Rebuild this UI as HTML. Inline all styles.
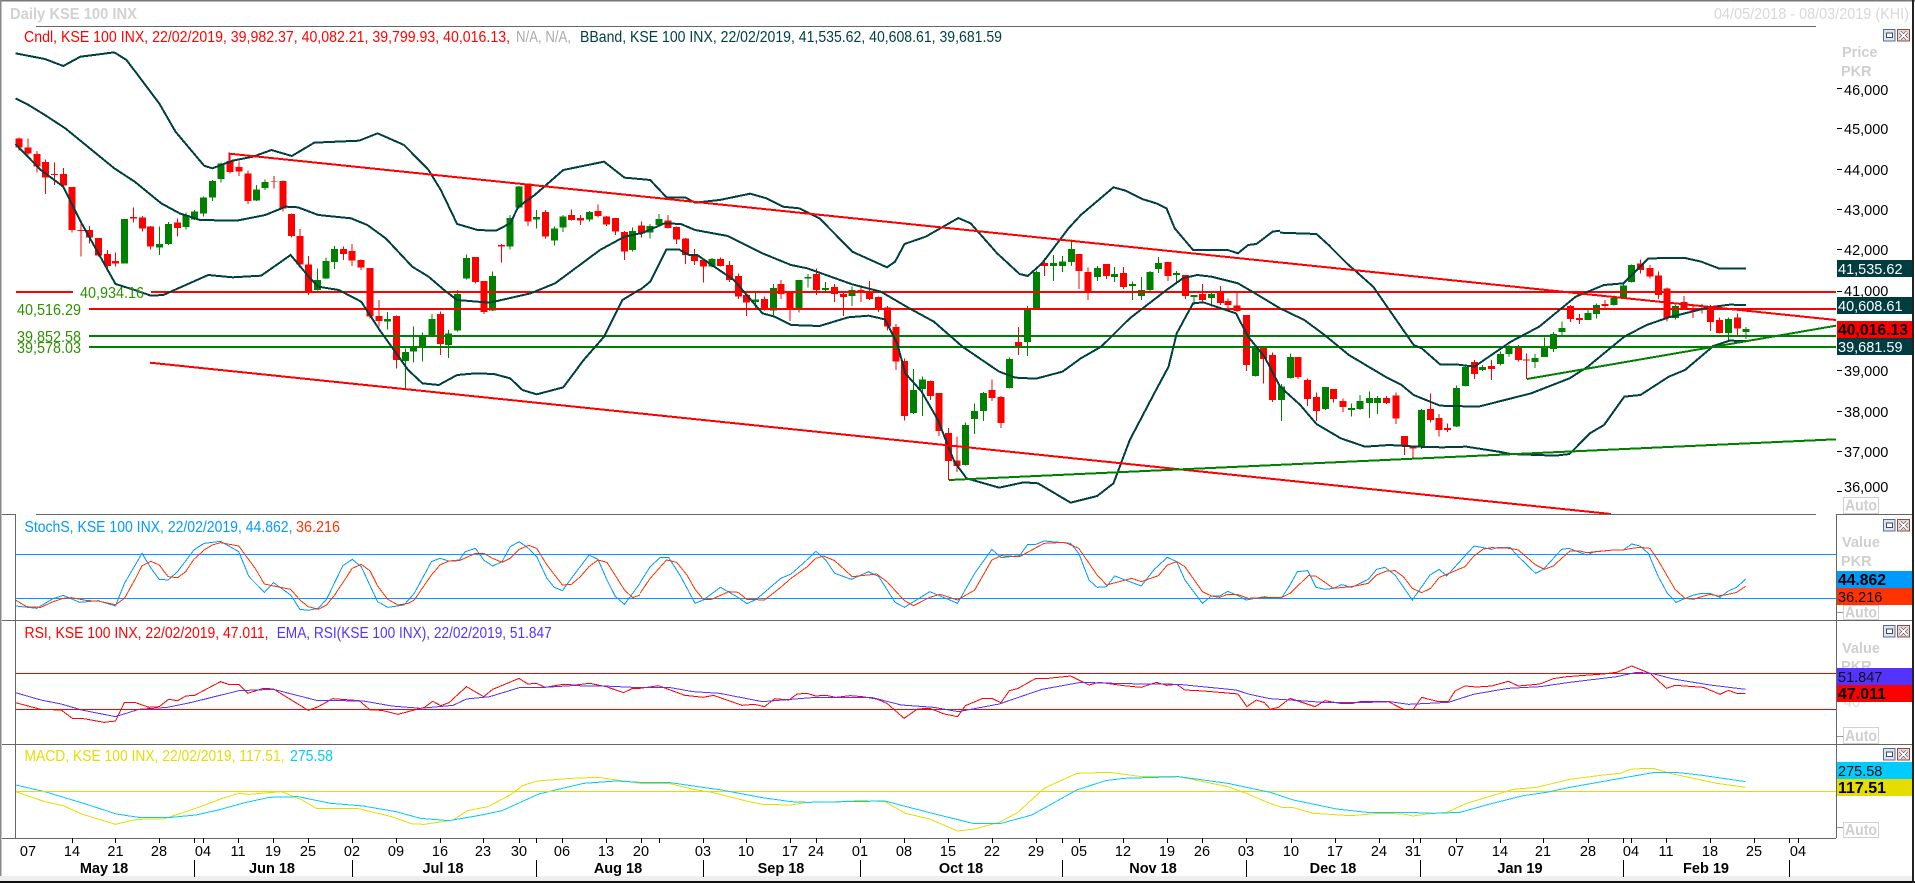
<!DOCTYPE html>
<html><head><meta charset="utf-8"><title>Daily KSE 100 INX</title>
<style>
html,body{margin:0;padding:0;background:#fff;width:1915px;height:883px;overflow:hidden}
svg{display:block}
text{font-family:"Liberation Sans",Arial,sans-serif;font-size:14.5px}
text[textLength]{font-size:15.5px}
.b{font-weight:bold}
.g{fill:#cfcfcf;font-weight:bold}
path,polyline,line,rect{shape-rendering:crispEdges}
.v{fill:none;vector-effect:non-scaling-stroke}
.bb{stroke:#004040;stroke-width:2}
.t1{stroke-width:1}
</style></head><body>
<svg width="1915" height="883" viewBox="0 0 1915 883" xmlns="http://www.w3.org/2000/svg">
<rect width="1915" height="883" fill="#fff"/>

<!-- CANDLES left -->
<g transform="translate(0 130) scale(.40816 .33333)">
<path class="v" stroke="#f00" stroke-width="1" d="M47 22V62M69 25V75M91 63V128M111 88V192M133 98V165M155 114V170M177 171V308M198 270V380M219 288V340M241 324V380M263 360V418M283 368V410M327 232V278M349 258V305M369 288V358M435 265V320M563 70V130M585 95V138M607 122V222M671 138V175M693 152V245M714 250V323M735 297V414M756 378V495M842 350V390M863 342V408M885 388V420M907 414V565M928 510V590M971 556V716M1079 545V675M1165 381V460M1186 453V552M1229 342V398M1293 160V288M1336 240V325M1400 238V272M1422 255V285M1465 223V262M1486 258V288M1508 264V315M1530 303V390"/>
<path class="v" stroke="#008000" stroke-width="1" d="M391 290V375M413 276V345M456 248V298M477 240V270M499 200V260M521 150V213M542 97V158M628 165V213M649 148V180M778 415V482M799 382V447M820 348V417M949 546V598M993 655V775M1013 590V698M1035 608V695M1058 552V618M1099 600V684M1121 480V604M1143 373V448M1207 424V543M1250 255V358M1272 168V235M1315 240V296M1358 290V347M1379 255V306M1444 243V274M1550 292V365"/>
<path class="v" stroke="#f00" stroke-width="7" d="M47 25V52M69 52V70M91 72V110M111 96V143M133 132V135M155 132V166M177 171V300M198 300V303M219 300V322M241 324V377M263 372V408M283 393V401M327 261V265M349 262V296M369 290V350M435 277V294M563 93V126M585 111V125M607 130V213M671 153V155M693 153V235M714 252V318M735 318V404M756 403V485M842 357V372M863 363V392M885 390V413M907 414V560M928 558V573M971 558V690M1079 552V642M1165 381V456M1186 453V546M1229 345V350M1293 160V275M1336 246V320M1400 255V270M1422 264V271M1465 243V258M1486 260V284M1508 264V305M1530 306V365"/>
<path class="v" stroke="#008000" stroke-width="7" d="M305 267V401M391 342V353M413 282V342M456 255V291M477 245V268M499 203V251M521 153V203M542 100V147M628 178V212M649 156V174M778 450V480M799 393V446M820 357V396M949 567V575M993 666V693M1013 652V665M1035 617V652M1058 567V617M1099 610V645M1121 492V601M1143 384V446M1207 438V542M1250 264V350M1272 170V233M1315 261V269M1358 296V332M1379 260V293M1444 246V269M1550 303V360"/>
</g>
<!-- CANDLES middle -->
<g transform="translate(640 100) scale(.40816 .33333)">
<path class="v" stroke="#f00" stroke-width="1" d="M4 365V413M68 345V386M90 380V432M111 414V492M133 447V495M155 478V548M197 472V500M219 483V546M241 520V597M261 585V648M305 590V632M346 540V597M368 575V663M432 505V585M477 552V606M498 578V648M541 558V606M562 543V600M584 590V636M606 618V692M627 672V810M648 775V962M712 842V900M733 879V1008M756 984V1140M777 1010V1116M863 838V903M884 888V984M927 681V765M991 474V528M1076 462V567M1098 502V600M1143 492V537M1184 501V567M1293 486V543M1336 525V597M1378 552V606M1422 558V615M1441 595V630M1463 578V636M1486 645V813M1527 740V850M1550 757V906"/>
<path class="v" stroke="#008000" stroke-width="1" d="M25 372V416M47 342V378M176 474V502M283 578V628M327 552V645M390 540V638M412 522V562M455 546V576M520 560V618M670 807V942M692 830V948M797 968V1096M820 910V1002M842 876V963M905 773V865M949 618V768M971 512V627M1013 465V543M1035 468V516M1057 418V498M1121 498V543M1163 501V546M1207 545V600M1229 531V600M1249 513V575M1270 471V519M1314 513V546M1357 585V615M1400 575V620M1508 735V829"/>
<path class="v" stroke="#f00" stroke-width="7" d="M4 376V400M68 361V384M90 381V419M111 416V465M133 462V483M155 480V500M197 477V498M219 495V540M241 528V590M261 585V608M305 597V630M346 552V582M368 575V628M432 522V570M477 561V582M498 582V591M541 570V576M562 576V597M584 591V628M606 622V680M627 681V785M648 783V948M712 843V888M733 879V993M756 999V1083M777 1081V1098M863 870V894M884 891V969M927 726V738M991 489V498M1076 462V513M1098 516V576M1143 492V528M1184 519V561M1293 486V528M1336 525V588M1378 582V600M1422 576V609M1441 603V615M1463 616V633M1486 645V795M1527 743V777M1550 765V900"/>
<path class="v" stroke="#008000" stroke-width="7" d="M25 378V398M47 357V375M176 477V500M283 598V606M327 564V632M390 540V625M412 531V536M455 564V570M520 570V588M670 870V939M692 838V867M797 975V1095M820 933V957M842 879V933M905 777V864M949 627V726M971 516V625M1013 489V498M1035 484V498M1057 447V486M1121 504V531M1163 522V531M1207 552V558M1229 570V588M1249 516V570M1270 489V507M1314 519V525M1357 585V591M1400 582V594M1508 738V828"/>
</g>
<!-- CANDLES right -->
<g transform="translate(1280 230) scale(.40502 .33333)">
<path class="v" stroke="#f00" stroke-width="1" d="M45 381V447M68 445V528M90 487V573M132 477V518M155 505V546M263 498V522M286 488V582M307 618V675M328 650V684M371 490V578M393 552V620M414 580V606M480 390V447M522 390V450M589 345V395M609 370V447M717 225V276M739 252V282M803 210V234M890 88V130M913 105V146M934 125V207M955 172V275M998 198V240M1020 225V264M1042 222V250M1063 225V303M1085 262V310M1129 250V316"/>
<path class="v" stroke="#008000" stroke-width="1" d="M4 462V573M26 370V445M112 471V540M177 520V560M198 495V540M221 485V564M241 498V552M349 537V657M436 466V591M458 404V470M500 405V423M544 365V406M566 345V380M630 372V414M653 322V381M675 306V366M696 275V316M761 240V270M782 220V265M825 196V226M848 160V206M868 103V157M976 225V268M1107 262V333M1150 291V327"/>
<path class="v" stroke="#f00" stroke-width="7" d="M45 381V441M68 450V507M90 501V543M132 477V507M155 513V531M263 504V519M286 497V565M307 618V648M328 650V655M371 537V570M393 564V600M414 594V600M480 396V432M522 408V417M589 351V390M609 388V392M717 228V267M739 264V270M803 222V228M890 100V120M913 114V140M934 136V195M955 175V264M998 216V240M1020 240V242M1042 235V238M1063 228V276M1085 270V309M1129 262V296"/>
<path class="v" stroke="#008000" stroke-width="7" d="M4 470V510M26 381V444M112 471V537M177 534V540M198 513V537M221 504V519M241 504V519M349 540V651M436 474V590M458 411V468M500 411V420M544 372V402M566 350V372M630 384V396M653 348V381M675 312V357M696 294V306M761 249V270M782 225V252M825 204V225M848 166V204M868 105V156M976 228V264M1107 267V309M1150 297V306"/>
</g>

<!-- Horizontal levels -->
<path stroke="#f00" stroke-width="2" fill="none" d="M16 292H73M151 292H1836M89 309H1836"/>
<path stroke="#008000" stroke-width="2" fill="none" d="M89 336H1836M89 347H1836"/>

<!-- Bollinger -->
<g transform="translate(0 0) scale(.40816 .33333)">
<polyline class="v bb" points="38,160 110,177 155,198 197,170 230,165 280,157 310,180 350,245 390,310 430,395 500,497 520,505 570,482 620,470 665,450 715,468 770,428 880,422 925,400 990,435 1050,510 1080,570 1120,672 1170,690 1215,692 1250,670 1270,620 1310,585 1380,510 1480,485 1530,533 1568,537"/>
<polyline class="v bb" points="38,295 70,315 110,345 160,385 280,505 330,545 395,610 440,640 490,660 580,662 650,645 700,620 730,622 780,645 860,655 900,675 945,715 1010,800 1050,830 1088,870 1120,900 1200,908 1300,880 1360,850 1470,750 1530,710 1568,700"/>
</g>
<g transform="translate(0 130) scale(.40816 .33333)">
<polyline class="v bb" points="38,42 100,120 155,170 200,280 283,462 330,480 370,497 400,495 510,435 570,442 640,437 712,375 760,445 780,470 830,480 885,515 930,600 1000,720 1035,760 1075,765 1120,735 1165,730 1210,732 1250,745 1280,780 1315,793 1380,772 1430,690 1480,620 1525,510 1568,478"/>
</g>
<g transform="translate(640 100) scale(.40816 .33333)">
<polyline class="v bb" points="0,237 25,240 65,292 110,292 135,308 195,300 270,281 310,295 350,320 390,325 440,355 520,455 605,502 625,485 648,432 700,410 780,354 810,370 875,460 930,522 950,528 985,490 1050,385 1080,345 1160,262 1190,272 1230,297 1265,310 1290,325 1310,385 1355,450 1440,450 1465,460 1490,435 1510,432 1550,395 1568,392"/>
<polyline class="v bb" points="0,402 60,370 100,372 135,390 215,408 300,460 370,495 410,505 520,553 590,575 660,625 720,665 790,740 880,815 920,833 970,836 1035,815 1080,775 1130,740 1200,655 1290,570 1330,535 1365,525 1400,530 1465,550 1500,575 1568,625"/>
<polyline class="v bb" points="0,570 25,545 65,448 95,448 120,465 140,465 230,540 300,640 330,650 370,675 440,678 510,652 560,647 600,658 630,730 650,820 690,875 730,960 770,1085 800,1135 880,1163 940,1147 975,1150 1055,1208 1120,1188 1160,1150 1200,1020 1260,880 1295,800 1315,700 1355,610 1380,607 1460,640 1490,710 1530,770 1568,860"/>
</g>
<g transform="translate(1280 230) scale(.40502 .33333)">
<polyline class="v bb" points="0,8 90,12 120,45 165,100 230,170 270,240 330,345 350,355 395,403 440,404 480,410 570,335 640,290 690,240 730,200 800,165 848,160 910,85 1000,84 1040,95 1085,116 1150,116"/>
<polyline class="v bb" points="0,235 60,270 110,315 170,375 260,440 300,465 330,495 395,527 490,530 620,490 715,445 760,410 850,320 905,285 960,262 1000,250 1060,232 1110,224 1150,225"/>
<polyline class="v bb" points="0,470 50,525 90,582 150,625 210,650 270,645 340,650 400,652 460,650 540,665 570,672 680,677 715,672 765,610 800,585 850,500 890,495 960,440 1000,420 1070,348 1110,332 1150,333"/>
</g>

<!-- Trendlines -->
<path fill="none" stroke="#f00" stroke-width="2" d="M229.5 161V153.7L1836 320M150 362.7L1611 514"/>
<path fill="none" stroke="#008000" stroke-width="2" d="M949 480L1836 439.3M1527 379L1836 325.7"/>
<path fill="none" stroke="#f00" stroke-width="1" d="M1526.5 379V362"/>

<!-- Level labels -->
<g fill="#2f8f00">
<text x="80" y="298" textLength="64" lengthAdjust="spacingAndGlyphs">40,934.16</text>
<text x="17" y="315" textLength="64" lengthAdjust="spacingAndGlyphs">40,516.29</text>
<text x="17" y="342" textLength="64" lengthAdjust="spacingAndGlyphs">39,852.58</text>
<text x="17" y="353" textLength="64" lengthAdjust="spacingAndGlyphs">39,578.03</text>
</g>

<!-- Panel 2: StochS -->
<path stroke="#0099ff" stroke-width="1" fill="none" d="M16 554.5H1836M16 598.5H1836"/>
<g transform="translate(0 500) scale(.40816 .33333)">
<polyline class="v t1" stroke="#0099ff" points="38,318 90,325 130,296 155,286 195,307 240,302 283,318 305,250 348,160 370,205 390,238 412,240 435,215 475,150 500,130 540,124 585,155 610,230 648,277 670,248 712,285 735,328 755,331 780,325 800,298 840,197 863,178 885,200 925,305 950,322 990,315 1015,280 1057,185 1078,175 1100,183 1125,180 1140,155 1165,145 1185,180 1207,198 1230,185 1250,140 1272,125 1295,145 1315,170 1340,235 1358,262 1378,272 1400,235 1443,165 1465,178 1487,240 1508,290 1530,313 1568,250"/>
<polyline class="v t1" stroke="#ff3300" points="38,300 65,320 100,322 130,305 155,295 175,293 215,302 240,303 283,314 305,295 330,240 348,197 370,184 390,195 412,230 435,233 455,215 475,178 500,150 520,135 540,128 585,138 625,205 648,252 670,258 712,268 735,300 755,320 780,328 800,315 820,285 863,205 885,193 907,213 925,258 950,298 975,315 1000,310 1015,300 1057,225 1078,195 1100,183 1125,182 1165,160 1185,160 1207,175 1230,187 1250,175 1272,148 1295,136 1315,145 1340,195 1378,255 1400,253 1422,230 1443,200 1465,180 1487,187 1530,270 1550,293 1568,285"/>
<!-- RSI left -->
<polyline class="v t1" stroke="#f00" points="38,608 100,628 150,630 177,655 205,656 255,667 283,663 305,607 330,607 365,622 390,620 413,598 435,602 455,588 477,586 540,545 560,553 585,553 607,580 645,565 670,567 755,631 780,620 815,596 880,602 907,630 935,631 975,643 1040,622 1060,604 1080,617 1100,608 1143,560 1185,590 1207,568 1272,535 1293,552 1315,550 1335,562 1380,553 1410,555 1445,550 1485,560 1528,578 1550,565 1568,565"/>
<polyline class="v t1" stroke="#5533ff" points="38,578 100,600 150,612 200,630 283,650 340,628 410,622 470,607 585,572 670,568 775,601 890,603 960,618 1030,625 1110,616 1143,597 1200,590 1272,563 1335,562 1400,557 1480,558 1568,563"/>
<!-- MACD left -->
<polyline class="v t1" stroke="#e5dd00" points="38,875 110,905 155,917 200,942 283,973 335,958 400,957 480,925 545,895 585,880 610,883 690,875 740,900 775,925 875,925 960,950 1010,972 1040,973 1110,960 1145,932 1195,920 1250,885 1280,857 1315,843 1400,835 1465,832 1568,850"/>
<polyline class="v t1" stroke="#00ccff" points="38,855 110,875 210,912 285,942 340,952 420,952 480,945 535,930 600,908 660,892 730,890 810,910 890,918 970,935 1030,955 1100,962 1180,945 1230,932 1320,882 1430,850 1510,843 1568,847"/>
</g>
<path stroke="#f00" stroke-width="1" fill="none" d="M16 673.5H1836M16 709.5H1836"/>
<path stroke="#e5dd00" stroke-width="1" fill="none" d="M16 791.5H1836"/>
<g transform="translate(640 510) scale(.40816 .33333)">
<polyline class="v t1" stroke="#0099ff" points="0,218 25,170 50,142 70,142 100,200 135,280 155,270 197,232 240,262 262,281 285,268 345,205 370,192 400,160 431,124 455,150 477,190 518,208 560,185 585,200 625,277 648,292 710,245 755,268 778,280 820,190 862,118 885,143 930,137 950,103 970,103 990,93 1055,100 1075,130 1100,210 1120,232 1143,230 1163,198 1228,228 1260,178 1292,142 1315,155 1335,210 1378,280 1400,258 1420,258 1440,244 1465,257 1485,270 1530,260 1543,263"/>
<polyline class="v t1" stroke="#ff3300" points="0,250 25,205 65,150 90,157 115,195 135,238 155,268 175,268 218,245 240,247 262,268 305,270 345,232 370,205 410,170 431,145 450,138 477,152 520,200 580,192 605,215 648,272 670,287 710,262 735,253 778,270 820,240 862,150 885,137 930,140 990,100 1040,97 1075,115 1120,195 1143,225 1205,205 1228,215 1270,197 1292,165 1315,155 1335,170 1378,245 1400,258 1420,262 1440,253 1465,254 1490,265 1543,262"/>
<polyline class="v t1" stroke="#f00" points="0,535 45,527 110,556 155,562 180,556 250,586 280,583 305,590 330,566 365,570 385,552 410,550 430,558 455,556 480,562 515,557 545,560 580,567 605,580 647,625 680,597 710,595 745,612 778,620 797,587 840,565 862,565 884,578 905,542 925,536 970,505 1000,505 1055,498 1100,525 1125,517 1185,527 1228,532 1265,517 1290,526 1315,523 1335,540 1380,543 1420,547 1465,552 1487,590 1510,570 1530,578 1543,596"/>
<polyline class="v t1" stroke="#5533ff" points="0,532 75,533 130,545 195,550 300,575 430,562 570,563 640,585 720,592 780,605 880,582 985,538 1080,517 1190,521 1320,523 1460,540 1490,552 1543,566"/>
<polyline class="v t1" stroke="#e5dd00" points="0,820 70,820 130,838 180,848 260,873 300,883 370,885 410,877 490,875 540,871 600,875 650,910 710,927 778,963 820,957 880,937 925,908 990,835 1070,790 1150,787 1230,800 1320,800 1440,830 1485,850 1543,880"/>
<polyline class="v t1" stroke="#00ccff" points="0,817 75,818 130,828 200,840 300,863 370,875 410,877 600,873 700,905 815,940 885,940 960,915 1070,840 1140,812 1185,805 1320,800 1440,820 1543,847"/>
</g>
<g transform="translate(1270 510) scale(.33333)">
<polyline class="v t1" stroke="#0099ff" points="0,263 35,263 60,225 82,185 113,182 138,232 165,238 190,235 215,224 245,232 295,208 320,178 345,172 375,195 427,270 480,195 508,178 530,198 612,108 640,113 665,118 685,112 720,112 745,140 797,190 820,178 875,118 897,115 950,135 975,125 1030,120 1060,120 1085,102 1110,108 1135,130 1165,200 1192,250 1218,277 1268,256 1295,250 1320,250 1350,262 1375,243 1400,232 1427,207"/>
<polyline class="v t1" stroke="#ff3300" points="0,262 35,262 60,250 115,197 137,198 165,217 190,235 245,230 295,220 320,195 350,183 375,182 400,200 427,235 455,248 482,235 508,202 530,193 585,170 612,138 640,117 665,113 720,115 745,120 797,165 823,178 850,168 875,145 900,123 930,123 950,128 1030,120 1060,120 1085,115 1110,112 1140,115 1165,152 1215,238 1245,265 1270,268 1295,260 1320,253 1345,258 1375,253 1400,247 1427,229"/>
<polyline class="v t1" stroke="#f00" points="0,598 25,592 60,565 135,590 165,572 210,580 250,580 270,575 355,575 400,598 430,598 455,562 505,575 535,575 555,543 585,528 620,531 665,528 715,514 745,528 810,522 850,506 890,500 1000,492 1040,487 1085,468 1140,490 1190,535 1215,526 1300,532 1350,553 1375,541 1400,550 1427,550"/>
<polyline class="v t1" stroke="#5533ff" points="0,566 60,570 160,577 300,577 360,575 415,583 535,577 610,553 715,535 810,530 900,517 1040,500 1100,487 1145,490 1210,507 1320,525 1427,538"/>
<polyline class="v t1" stroke="#e5dd00" points="0,880 35,892 70,893 130,910 180,913 240,917 330,910 400,912 430,918 470,912 530,907 590,880 640,865 730,838 800,832 900,808 1000,795 1050,790 1085,777 1150,775 1200,790 1340,820 1427,832"/>
<polyline class="v t1" stroke="#00ccff" points="0,847 70,870 200,897 290,907 410,907 490,910 570,907 660,882 760,857 830,847 900,832 1080,800 1150,788 1225,788 1290,795 1427,815"/>
</g>

<!-- Frame lines -->
<rect x="0" y="0" width="1915" height="1.5" fill="#777"/>
<rect x="0" y="0" width="1.5" height="881" fill="#888"/>
<rect x="0" y="876" width="1912" height="5" fill="#eee"/>
<rect x="0" y="881" width="1915" height="2" fill="#111"/>
<rect x="1912" y="0" width="2" height="883" fill="#222"/>
<path stroke="#666" stroke-width="1" fill="none" d="M36 26.5H1816M2 514.5H15.5M36 514.5H1816M1836 514.5H1912M2 620.5H1912M2 744.5H1912M2 838.5H1836M15.5 514V838M1836.5 514V838"/>

<!-- Title and legends -->
<text class="b" x="10" y="19" fill="#d2d2d2" textLength="127" lengthAdjust="spacingAndGlyphs">Daily KSE 100 INX</text>
<text x="1714" y="19" fill="#d8d8d8" textLength="195" lengthAdjust="spacingAndGlyphs">04/05/2018 - 08/03/2019 (KHI)</text>
<text x="24" y="42" fill="#f00" textLength="486" lengthAdjust="spacingAndGlyphs">Cndl, KSE 100 INX, 22/02/2019, 39,982.37, 40,082.21, 39,799.93, 40,016.13,</text>
<text x="516" y="42" fill="#aaa" textLength="55" lengthAdjust="spacingAndGlyphs">N/A, N/A,</text>
<text x="580" y="42" fill="#004040" textLength="422" lengthAdjust="spacingAndGlyphs">BBand, KSE 100 INX, 22/02/2019, 41,535.62, 40,608.61, 39,681.59</text>
<text x="24.5" y="532" fill="#0099ff" textLength="268" lengthAdjust="spacingAndGlyphs">StochS, KSE 100 INX, 22/02/2019, 44.862,</text>
<text x="296" y="532" fill="#ff3300" textLength="44" lengthAdjust="spacingAndGlyphs">36.216</text>
<text x="24.5" y="638" fill="#f00" textLength="244" lengthAdjust="spacingAndGlyphs">RSI, KSE 100 INX, 22/02/2019, 47.011,</text>
<text x="276.7" y="638" fill="#5533ff" textLength="275" lengthAdjust="spacingAndGlyphs">EMA, RSI(KSE 100 INX), 22/02/2019, 51.847</text>
<text x="24.5" y="761" fill="#e6dc00" textLength="260" lengthAdjust="spacingAndGlyphs">MACD, KSE 100 INX, 22/02/2019, 117.51,</text>
<text x="290" y="761" fill="#00ccff" textLength="43" lengthAdjust="spacingAndGlyphs">275.58</text>

<!-- Y axis main -->
<text class="g" x="1842" y="57">Price</text>
<text class="g" x="1841" y="76">PKR</text>
<path stroke="#000" stroke-width="1" fill="none" d="M1837 88.5H1842M1837 128.5H1842M1837 169.5H1842M1837 209.5H1842M1837 249.5H1842M1837 291.5H1842M1837 370.5H1842M1837 411.5H1842M1837 451.5H1842M1837 491.5H1842"/>
<g fill="#000">
<text x="1844" y="95">46,000</text>
<text x="1844" y="134">45,000</text>
<text x="1844" y="175">44,000</text>
<text x="1844" y="215">43,000</text>
<text x="1844" y="255">42,000</text>
<text x="1844" y="296">41,000</text>
<text x="1844" y="376">39,000</text>
<text x="1844" y="417">38,000</text>
<text x="1844" y="457">37,000</text>
<text x="1844" y="492">36,000</text>
</g>
<rect x="1837" y="260" width="75" height="17" fill="#003c40"/>
<text x="1838" y="274" fill="#fff">41,535.62</text>
<rect x="1837" y="297" width="75" height="17" fill="#003c40"/>
<text x="1838" y="311" fill="#fff">40,608.61</text>
<rect x="1837" y="321" width="75" height="17" fill="#f00"/>
<text class="b" x="1838" y="335" fill="#000" textLength="70" lengthAdjust="spacingAndGlyphs">40,016.13</text>
<rect x="1837" y="338" width="75" height="17" fill="#003c40"/>
<text x="1838" y="352" fill="#fff">39,681.59</text>

<!-- Right column panels -->
<text class="g" x="1842" y="547">Value</text>
<text class="g" x="1841" y="566">PKR</text>
<rect x="1837" y="571" width="75" height="17" fill="#0099ff"/>
<text class="b" x="1838" y="585" fill="#000" textLength="48" lengthAdjust="spacingAndGlyphs">44.862</text>
<rect x="1837" y="588" width="75" height="17" fill="#ff3300"/>
<text x="1838" y="602" fill="#111">36.216</text>

<text class="g" x="1842" y="653">Value</text>
<text class="g" x="1841" y="671">PKR</text>
<text x="1844" y="707" fill="#ddd">40</text>
<rect x="1837" y="668" width="75" height="17" fill="#5533ff"/>
<text x="1838" y="682" fill="#111">51.847</text>
<rect x="1837" y="685" width="75" height="17" fill="#f00"/>
<text class="b" x="1838" y="699" fill="#000" textLength="48" lengthAdjust="spacingAndGlyphs">47.011</text>

<rect x="1837" y="762" width="75" height="17" fill="#00ccff"/>
<text x="1838" y="776" fill="#111">275.58</text>
<rect x="1837" y="779" width="75" height="17" fill="#e5dd00"/>
<text class="b" x="1838" y="793" fill="#000" textLength="48" lengthAdjust="spacingAndGlyphs">117.51</text>

<!-- Auto boxes -->
<g fill="none" stroke="#d0d0d0" stroke-width="1">
<rect x="1843.5" y="497.5" width="35" height="16"/>
<rect x="1843.5" y="605.5" width="35" height="14"/>
<rect x="1843.5" y="727.5" width="35" height="16"/>
<rect x="1843.5" y="822.5" width="35" height="15"/>
</g>
<path stroke="#999" stroke-width="1" fill="none" d="M1837 612.5H1843M1837 736.5H1843M1837 827.5H1843"/>
<g>
<text class="g" x="1845" y="510.5" textLength="32" lengthAdjust="spacingAndGlyphs">Auto</text>
<text class="g" x="1845" y="617.5" textLength="32" lengthAdjust="spacingAndGlyphs">Auto</text>
<text class="g" x="1845" y="741" textLength="32" lengthAdjust="spacingAndGlyphs">Auto</text>
<text class="g" x="1845" y="835" textLength="32" lengthAdjust="spacingAndGlyphs">Auto</text>
</g>

<!-- Window buttons -->
<defs>
<g id="btns">
<rect x="1883.5" y="0.5" width="11.5" height="11.5" fill="#dfe5f0" stroke="#5a6c8c"/>
<rect x="1886.5" y="4" width="6" height="4.5" fill="#fff" stroke="#3c4a60"/>
<rect x="1897.5" y="0.5" width="12" height="11.5" fill="#e6d6d6" stroke="#8a4c4c"/>
<path d="M1900 3L1907 10M1907 3L1900 10" stroke="#666" stroke-width="3.4" fill="none"/>
<path d="M1900 3L1907 10M1907 3L1900 10" stroke="#fff" stroke-width="1.6" fill="none"/>
</g>
</defs>
<use href="#btns" transform="translate(0 29)"/>
<use href="#btns" transform="translate(0 519)"/>
<use href="#btns" transform="translate(0 625)"/>
<use href="#btns" transform="translate(0 748)"/>

<!-- X axis -->
<path stroke="#000" stroke-width="1" fill="none" d="M72.5 838V843M115.5 838V843M159.5 838V843M194.5 838V843M203.5 838V843M238.5 838V843M273.5 838V843M308.5 838V843M352.5 838V843M396.5 838V843M440.5 838V843M483.5 838V843M519.5 838V843M536.5 838V843M562.5 838V843M606.5 838V843M641.5 838V843M659.5 838V843M703.5 838V843M746.5 838V843M790.5 838V843M816.5 838V843M860.5 838V843M904.5 838V843M948.5 838V843M992.5 838V843M1036.5 838V843M1062.5 838V843M1079.5 838V843M1123.5 838V843M1167.5 838V843M1202.5 838V843M1246.5 838V843M1291.5 838V843M1335.5 838V843M1379.5 838V843M1413.5 838V843M1420.5 838V843M1456.5 838V843M1500.5 838V843M1543.5 838V843M1588.5 838V843M1623.5 838V843M1631.5 838V843M1666.5 838V843M1710.5 838V843M1754.5 838V843M1789.5 838V843M1798.5 838V843"/>
<path stroke="#000" stroke-width="1" fill="none" d="M194.5 860V877M352.5 860V877M536.5 860V877M703.5 860V877M860.5 860V877M1062.5 860V877M1246.5 860V877M1420.5 860V877M1623.5 860V877M1789.5 860V877"/>
<g fill="#000" text-anchor="middle">
<text x="28" y="856">07</text><text x="72" y="856">14</text><text x="115.5" y="856">21</text><text x="159" y="856">28</text><text x="203" y="856">04</text><text x="238" y="856">11</text><text x="273" y="856">19</text><text x="308" y="856">25</text><text x="352" y="856">02</text><text x="396" y="856">09</text><text x="440" y="856">16</text><text x="483" y="856">23</text><text x="519" y="856">30</text><text x="562" y="856">06</text><text x="606" y="856">13</text><text x="641" y="856">20</text><text x="703" y="856">03</text><text x="746" y="856">10</text><text x="790" y="856">17</text><text x="816" y="856">24</text><text x="860" y="856">01</text><text x="904" y="856">08</text><text x="948" y="856">15</text><text x="992" y="856">22</text><text x="1036" y="856">29</text><text x="1079" y="856">05</text><text x="1123" y="856">12</text><text x="1167" y="856">19</text><text x="1202" y="856">26</text><text x="1246" y="856">03</text><text x="1291" y="856">10</text><text x="1335" y="856">17</text><text x="1379" y="856">24</text><text x="1413" y="856">31</text><text x="1456" y="856">07</text><text x="1500" y="856">14</text><text x="1543" y="856">21</text><text x="1588" y="856">28</text><text x="1631" y="856">04</text><text x="1666" y="856">11</text><text x="1710" y="856">18</text><text x="1754" y="856">25</text><text x="1798" y="856">04</text>
</g>
<g fill="#000" text-anchor="middle" font-weight="bold">
<text x="104" y="873">May 18</text><text x="272" y="873">Jun 18</text><text x="443" y="873">Jul 18</text><text x="618" y="873">Aug 18</text><text x="781" y="873">Sep 18</text><text x="961" y="873">Oct 18</text><text x="1153" y="873">Nov 18</text><text x="1333" y="873">Dec 18</text><text x="1520" y="873">Jan 19</text><text x="1706" y="873">Feb 19</text>
</g>
</svg>
</body></html>
